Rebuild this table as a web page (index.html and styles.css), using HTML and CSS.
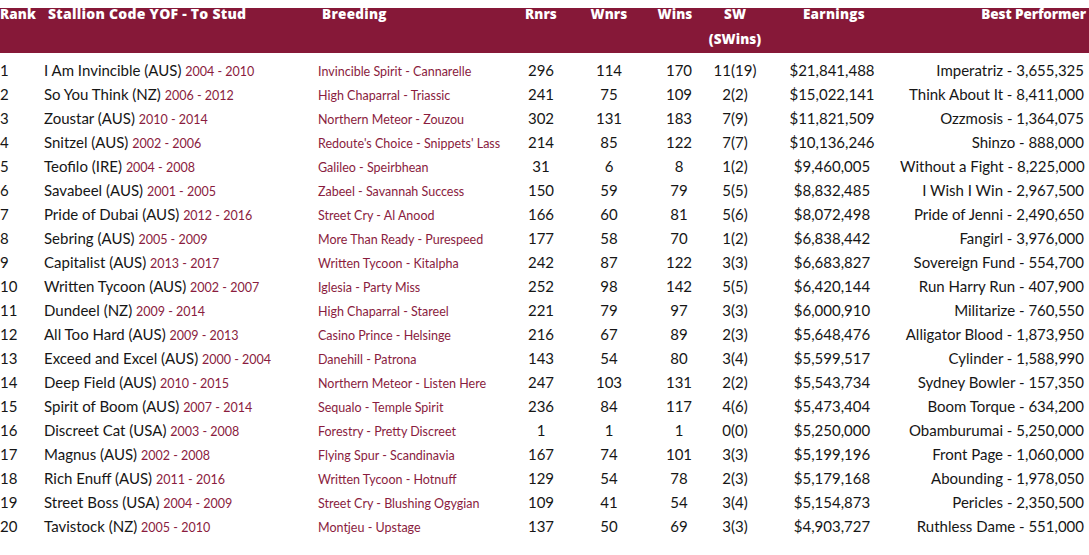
FILE: index.html
```html
<!DOCTYPE html>
<html>
<head>
<meta charset="utf-8">
<link rel="stylesheet" href="styles.css">
</head>
<body>
<div class="table">
  <div class="head row">
    <div class="c rank">Rank</div>
    <div class="c stallion">Stallion Code YOF - To Stud</div>
    <div class="c breeding">Breeding</div>
    <div class="c rnrs">Rnrs</div>
    <div class="c wnrs">Wnrs</div>
    <div class="c wins">Wins</div>
    <div class="c sw">SW<span class="sub">(SWins)</span></div>
    <div class="c earn">Earnings</div>
    <div class="c best">Best Performer</div>
  </div>
  <div class="body" id="body"></div>
</div>
<script>
var rows = [
["1","I Am Invincible (AUS)","2004 - 2010","Invincible Spirit - Cannarelle","296","114","170","11(19)","$21,841,488","Imperatriz - 3,655,325"],
["2","So You Think (NZ)","2006 - 2012","High Chaparral - Triassic","241","75","109","2(2)","$15,022,141","Think About It - 8,411,000"],
["3","Zoustar (AUS)","2010 - 2014","Northern Meteor - Zouzou","302","131","183","7(9)","$11,821,509","Ozzmosis - 1,364,075"],
["4","Snitzel (AUS)","2002 - 2006","Redoute's Choice - Snippets' Lass","214","85","122","7(7)","$10,136,246","Shinzo - 888,000"],
["5","Teofilo (IRE)","2004 - 2008","Galileo - Speirbhean","31","6","8","1(2)","$9,460,005","Without a Fight - 8,225,000"],
["6","Savabeel (AUS)","2001 - 2005","Zabeel - Savannah Success","150","59","79","5(5)","$8,832,485","I Wish I Win - 2,967,500"],
["7","Pride of Dubai (AUS)","2012 - 2016","Street Cry - Al Anood","166","60","81","5(6)","$8,072,498","Pride of Jenni - 2,490,650"],
["8","Sebring (AUS)","2005 - 2009","More Than Ready - Purespeed","177","58","70","1(2)","$6,838,442","Fangirl - 3,976,000"],
["9","Capitalist (AUS)","2013 - 2017","Written Tycoon - Kitalpha","242","87","122","3(3)","$6,683,827","Sovereign Fund - 554,700"],
["10","Written Tycoon (AUS)","2002 - 2007","Iglesia - Party Miss","252","98","142","5(5)","$6,420,144","Run Harry Run - 407,900"],
["11","Dundeel (NZ)","2009 - 2014","High Chaparral - Stareel","221","79","97","3(3)","$6,000,910","Militarize - 760,550"],
["12","All Too Hard (AUS)","2009 - 2013","Casino Prince - Helsinge","216","67","89","2(3)","$5,648,476","Alligator Blood - 1,873,950"],
["13","Exceed and Excel (AUS)","2000 - 2004","Danehill - Patrona","143","54","80","3(4)","$5,599,517","Cylinder - 1,588,990"],
["14","Deep Field (AUS)","2010 - 2015","Northern Meteor - Listen Here","247","103","131","2(2)","$5,543,734","Sydney Bowler - 157,350"],
["15","Spirit of Boom (AUS)","2007 - 2014","Sequalo - Temple Spirit","236","84","117","4(6)","$5,473,404","Boom Torque - 634,200"],
["16","Discreet Cat (USA)","2003 - 2008","Forestry - Pretty Discreet","1","1","1","0(0)","$5,250,000","Obamburumai - 5,250,000"],
["17","Magnus (AUS)","2002 - 2008","Flying Spur - Scandinavia","167","74","101","3(3)","$5,199,196","Front Page - 1,060,000"],
["18","Rich Enuff (AUS)","2011 - 2016","Written Tycoon - Hotnuff","129","54","78","2(3)","$5,179,168","Abounding - 1,978,050"],
["19","Street Boss (USA)","2004 - 2009","Street Cry - Blushing Ogygian","109","41","54","3(4)","$5,154,873","Pericles - 2,350,500"],
["20","Tavistock (NZ)","2005 - 2010","Montjeu - Upstage","137","50","69","3(3)","$4,903,727","Ruthless Dame - 551,000"]
];
var html = "";
rows.forEach(function(r){
  html += '<div class="row">' +
    '<div class="c rank">'+r[0]+'</div>' +
    '<div class="c stallion">'+r[1]+' <span class="yr">'+r[2]+'</span></div>' +
    '<div class="c breeding"><span class="br">'+r[3]+'</span></div>' +
    '<div class="c rnrs">'+r[4]+'</div>' +
    '<div class="c wnrs">'+r[5]+'</div>' +
    '<div class="c wins">'+r[6]+'</div>' +
    '<div class="c sw">'+r[7]+'</div>' +
    '<div class="c earn">'+r[8]+'</div>' +
    '<div class="c best">'+r[9]+'</div>' +
  '</div>';
});
document.getElementById("body").innerHTML = html;
</script>
</body>
</html>
```

FILE: styles.css
```css
html, body {
  margin: 0;
  padding: 0;
  background: #ffffff;
}
body {
  padding-top: 8px;
  font-family: "Lato", "Liberation Sans", sans-serif;
  color: #161616;
}
.table {
  width: 1089px;
}
.row {
  display: grid;
  grid-template-columns: 44px 274px 190px 66px 70px 62px 58px 136px 189px;
}
.head {
  background: #861838;
  color: #ffffff;
  height: 45px;
  font-family: "Open Sans", "Lato", sans-serif;
  font-weight: 800;
  font-size: 13.5px;
  line-height: 12px;
  letter-spacing: 0.1px;
}
.head .c {
  white-space: nowrap;
}
.head .stallion {
  padding-left: 4px;
  font-size: 14px;
  letter-spacing: 0.25px;
}
.head .breeding { padding-left: 4px; letter-spacing: 0.3px; }
.head .earn { letter-spacing: 0.3px; padding-left: 4px; }
.head .best { letter-spacing: -0.1px; }
.head .sub {
  display: block;
  margin-top: 13px;
}
.body {
  padding-top: 5px;
}
.body .row {
  height: 24px;
  line-height: 24px;
  font-size: 15px;
}
.c { white-space: nowrap; }
.rnrs, .wnrs, .wins, .sw, .earn { text-align: center; }
.body .wins { padding-left: 8px; }
.best { text-align: right; padding-right: 6px; }
.head .best { padding-right: 3px; }
.body .best { padding-right: 5px; }
.yr, .br {
  color: #8a1c3e;
  font-size: 12.5px;
}
```
